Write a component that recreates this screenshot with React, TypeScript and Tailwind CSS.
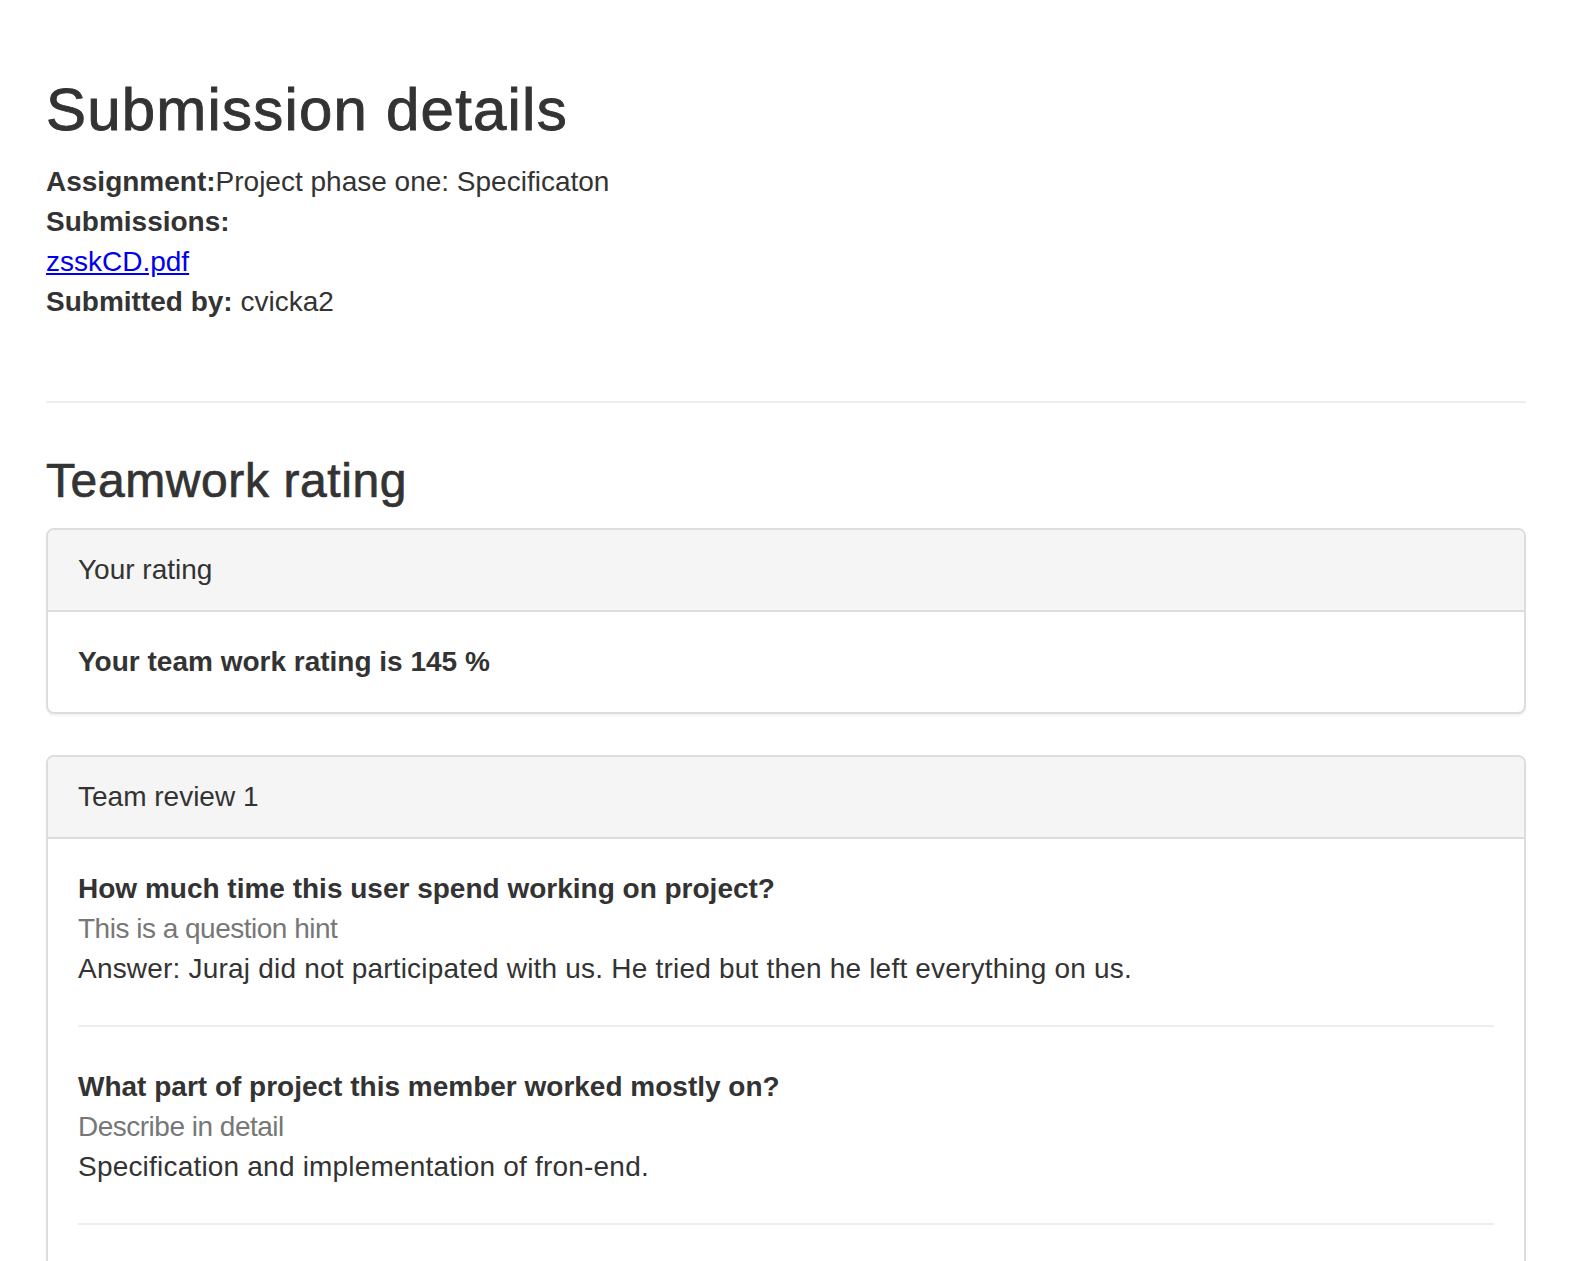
const questions = [
  {
    title: 'How much time this user spend working on project?',
    hint: 'This is a question hint',
    answer: 'Answer: Juraj did not participated with us. He tried but then he left everything on us.',
  },
  {
    title: 'What part of project this member worked mostly on?',
    hint: 'Describe in detail',
    answer: 'Specification and implementation of fron-end.',
  },
]

function Panel({ title, children }: { title: string; children: React.ReactNode }) {
  return (
    <div className="rounded-[8px] border-2 border-[#dddddd] bg-white shadow-[0_2px_2px_rgba(0,0,0,0.05)]">
      <div className="rounded-t-[6px] border-b-2 border-[#dddddd] bg-[#f5f5f5] px-[30px] py-[20px]">{title}</div>
      <div className="p-[30px]">{children}</div>
    </div>
  )
}

export default function App() {
  return (
    <div
      className="min-h-screen bg-white pl-[46px] pr-[52px] pt-[77px] text-[28px] leading-[40px] text-[#333333]"
      style={{ fontFamily: '"Liberation Sans", Arial, Helvetica, sans-serif' }}
    >
      <h1 className="text-[60px] leading-[66px] font-normal tracking-[1.2px] [-webkit-text-stroke:0.9px_#333333]">
        Submission details
      </h1>

      <div className="mt-[19px]">
        <div>
          <span className="font-bold">Assignment:</span>Project phase one: Specificaton
        </div>
        <div className="font-bold">Submissions:</div>
        <div>
          <a href="#" className="text-[#0000ee] underline">zsskCD.pdf</a>
        </div>
        <div>
          <span className="font-bold">Submitted by:</span> cvicka2
        </div>
      </div>

      <hr className="mt-[79px] border-0 border-t-2 border-[#eeeeee]" />

      <h3 className="mt-[51px] text-[48px] leading-[53px] font-normal tracking-[0.6px] [-webkit-text-stroke:0.7px_#333333]">
        Teamwork rating
      </h3>

      <div className="mt-[21px] flex flex-col gap-[41px]">
        <Panel title="Your rating">
          <div className="font-bold">Your team work rating is 145 %</div>
        </Panel>

        <Panel title="Team review 1">
          {questions.map((q, i) => (
            <div key={i}>
              <div className="font-bold">{q.title}</div>
              <div className="tracking-[-0.5px] text-[#777777]">{q.hint}</div>
              <div className="tracking-[0.2px]">{q.answer}</div>
              <hr className="mt-[36px] mb-[40px] border-0 border-t-2 border-[#eeeeee]" />
            </div>
          ))}
        </Panel>
      </div>
    </div>
  )
}
